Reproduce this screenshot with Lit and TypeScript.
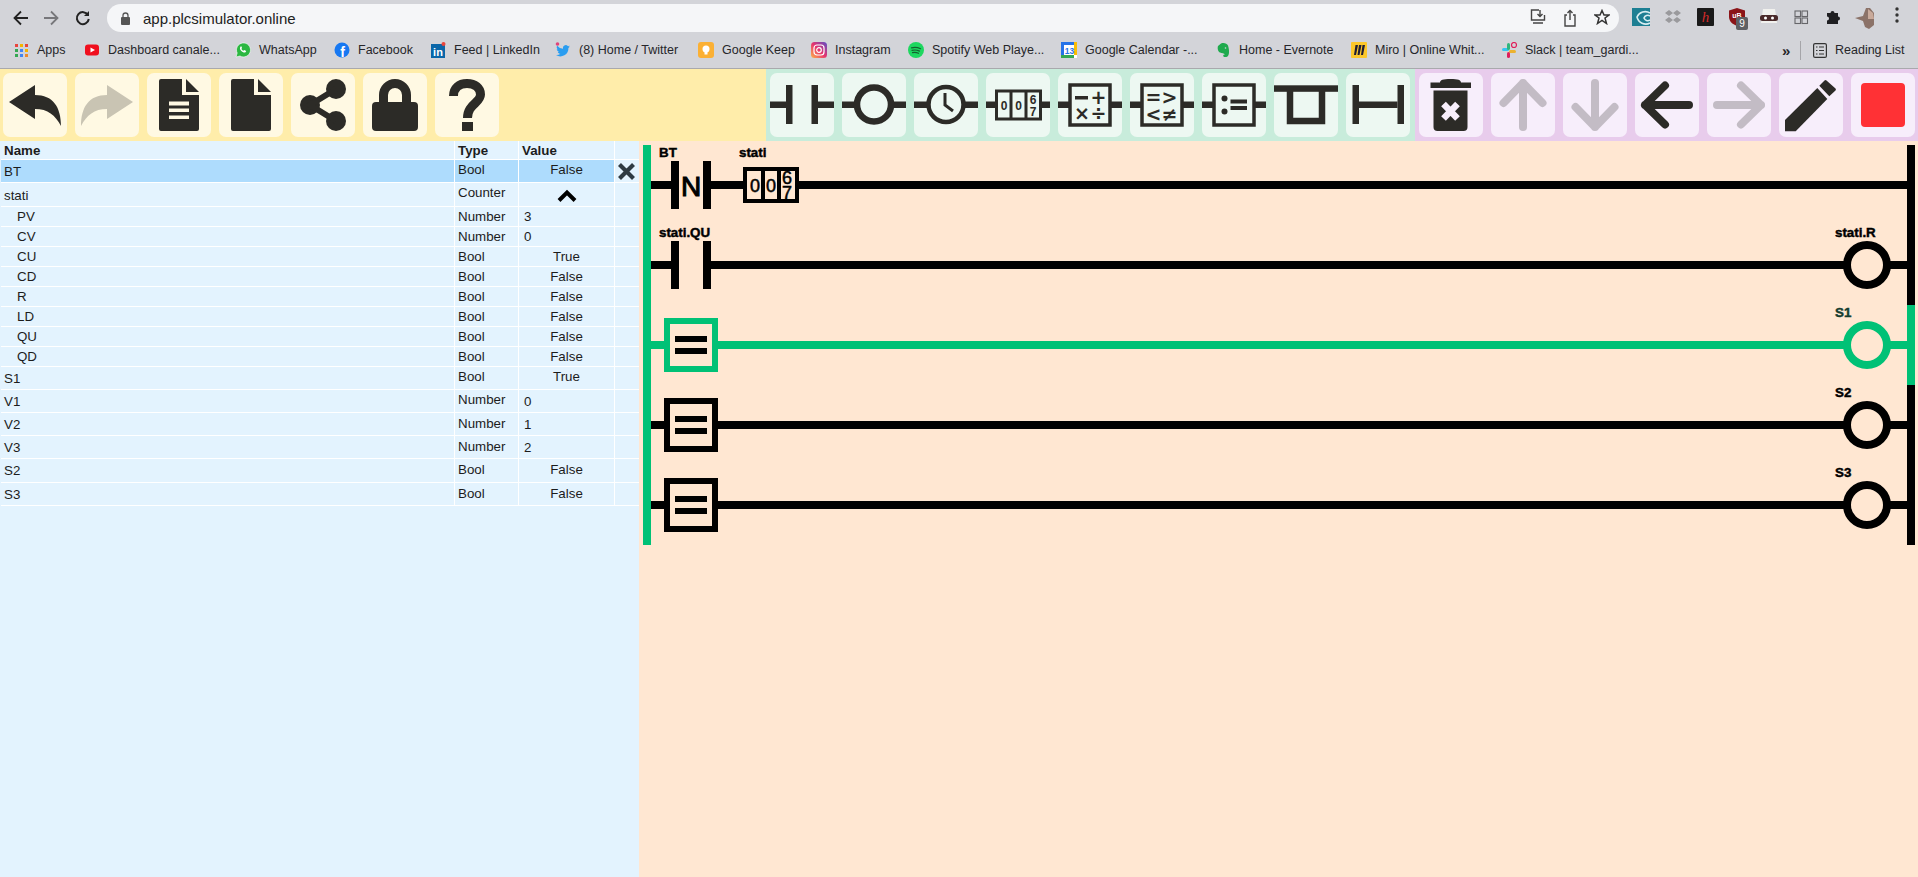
import { LitElement, html, css, svg } from "lit";
import { customElement } from "lit/decorators.js";
import { classMap } from "lit/directives/class-map.js";

const DARK = "#2c2b27";
const GREEN = "#00c176";

// ---- bookmark favicons ----
const favicons: Record<string, any> = {
  apps: svg`${[0, 1, 2].flatMap((r) =>
    [0, 1, 2].map(
      (c) =>
        svg`<rect x=${2 + c * 5} y=${2 + r * 5} width="3" height="3" fill=${["#e8453c", "#f4b400", "#e8453c", "#34a853", "#4285f4", "#f4b400", "#34a853", "#4285f4", "#ee8a2c"][r * 3 + c]}></rect>`,
    ),
  )}`,
  youtube: svg`<rect x="1" y="2.5" width="14" height="11" rx="3" fill="#f00f1e"></rect><path d="M6.5 5.5 11 8 6.5 10.5Z" fill="#fff"></path>`,
  whatsapp: svg`<path d="M1 15l1.2-4A7 7 0 1 1 5 14Z" fill="#2bb741" stroke="#fff" stroke-width=".6"></path><path d="M5.5 4.8c-1 1-.6 2.8.9 4.3s3.3 2 4.3 1l.5-1-2-1-.8.7c-.8-.3-1.600-1.100-2-2l.7-.8-1-2Z" fill="#fff"></path>`,
  facebook: svg`<circle cx="8" cy="8" r="7.5" fill="#1778f2"></circle><text x="8.5" y="14.5" text-anchor="middle" font-size="14" font-weight="700" fill="#fff" font-family="Liberation Sans">f</text>`,
  linkedin: svg`<rect x="1" y="2" width="14" height="14" fill="#0a66a8"></rect><text x="8" y="13.5" text-anchor="middle" font-size="11" font-weight="700" fill="#fff" font-family="Liberation Sans">in</text><circle cx="13.5" cy="2" r="2" fill="#e8453c"></circle>`,
  twitter: svg`<path d="M15 4.5c-.5.2-1 .4-1.600.4.600-.3 1-.9 1.200-1.500-.5.3-1.100.6-1.800.7a2.800 2.800 0 0 0-4.800 2.600A8 8 0 0 1 2.200 3.700a2.800 2.800 0 0 0 .9 3.800c-.5 0-.9-.1-1.300-.4 0 1.400 1 2.500 2.300 2.800-.4.100-.8.100-1.300 0 .4 1.100 1.400 1.900 2.600 1.900A5.700 5.700 0 0 1 1 13a8 8 0 0 0 12.400-7.100c.6-.4 1.200-.9 1.600-1.400Z" fill="#2a9df0"></path><circle cx="2.5" cy="2" r="1.8" fill="#e0457b"></circle>`,
  keep: svg`<rect width="16" height="16" rx="3" fill="#fbb034"></rect><circle cx="8" cy="7" r="3.5" fill="#fff"></circle><rect x="6.5" y="10" width="3" height="2.5" fill="#fff"></rect>`,
  instagram: svg`<defs><linearGradient id="ig" x1="0" y1="1" x2="1" y2="0"><stop offset="0" stop-color="#fdb44a"></stop><stop offset=".5" stop-color="#e6336f"></stop><stop offset="1" stop-color="#5a50c8"></stop></linearGradient></defs><rect width="16" height="16" rx="3.5" fill="url(#ig)"></rect><rect x="3" y="3" width="10" height="10" rx="3" fill="none" stroke="#fff" stroke-width="1.2"></rect><circle cx="8" cy="8" r="2.3" fill="none" stroke="#fff" stroke-width="1.2"></circle>`,
  spotify: svg`<circle cx="8" cy="8" r="8" fill="#1ed760"></circle><path d="M3.5 5.800c3-.8 6-.6 9 .9M4 8.300c2.600-.6 5-.4 7.500.8M4.500 10.600c2.100-.5 4-.3 6 .7" fill="none" stroke="#15602f" stroke-width="1.2" stroke-linecap="round"></path>`,
  calendar: svg`<rect width="16" height="16" fill="#fff"></rect><rect width="16" height="3" fill="#2673e8"></rect><rect width="3" height="16" fill="#2673e8"></rect><rect y="13" width="13" height="3" fill="#34a853"></rect><rect x="13" width="3" height="13" fill="#fbbc04"></rect><text x="8.5" y="11.5" text-anchor="middle" font-size="8.5" font-weight="700" fill="#2673e8" font-family="Liberation Sans">13</text>`,
  evernote: svg`<path d="M3 4 6 1.500c3-1 6 0 7 2 1 3 1.500 7 .5 9.500-1 2.500-4 2.500-5 1.500-.8-1 0-2.500 1.500-2-1-1-3-1.500-5-2C3.500 10 2 7 3 4Z" fill="#1faa4e"></path><circle cx="10.5" cy="6" r=".8" fill="#d3d4d9"></circle>`,
  miro: svg`<rect width="16" height="16" rx="1" fill="#fcc72b"></rect><path d="M4.500 3 3 13h2l2-10ZM8 3 6.500 13h2l2-10ZM11.500 3 10 13h2l2-10Z" fill="#1f1d33"></path>`,
  slack: svg`<rect x="1" y="6" width="7" height="3" rx="1.5" fill="#36c5f0"></rect><rect x="6" y="1" width="3" height="7" rx="1.5" fill="#2eb67d"></rect><rect x="8" y="8" width="7" height="3" rx="1.5" fill="#ecb22e"></rect><rect x="6" y="10" width="3" height="6" rx="1.5" fill="#e01e5a"></rect><circle cx="13" cy="3" r="2.5" fill="none" stroke="#e01e5a" stroke-width="1.2"></circle>`,
};

const bookmarks = [
  { icon: "apps", label: "Apps", width: 71 },
  { icon: "youtube", label: "Dashboard canale...", width: 151 },
  { icon: "whatsapp", label: "WhatsApp", width: 99 },
  { icon: "facebook", label: "Facebook", width: 96 },
  { icon: "linkedin", label: "Feed | LinkedIn", width: 125 },
  { icon: "twitter", label: "(8) Home / Twitter", width: 143 },
  { icon: "keep", label: "Google Keep", width: 113 },
  { icon: "instagram", label: "Instagram", width: 97 },
  { icon: "spotify", label: "Spotify Web Playe...", width: 153 },
  { icon: "calendar", label: "Google Calendar -...", width: 154 },
  { icon: "evernote", label: "Home - Evernote", width: 136 },
  { icon: "miro", label: "Miro | Online Whit...", width: 150 },
  { icon: "slack", label: "Slack | team_gardi...", width: 200 },
];

const extensions = [
  svg`<rect x="1" y="1" width="18" height="18" fill="#1d7f93"></rect><path d="M19 6a9 9 0 0 0-13 4 9 9 0 0 0 13 6M19 9a4 4 0 0 0-6 2 4 4 0 0 0 6 2" fill="none" stroke="#d8eef2" stroke-width="1.6"></path>`,
  svg`<path d="M6 3 10 6 6 9 2 6ZM14 3 18 6 14 9 10 6ZM6 10 10 13 6 16 2 13ZM14 10 18 13 14 16 10 13Z" fill="#9a9a9d"></path>`,
  svg`<rect x="2" y="1" width="17" height="18" rx="1" fill="#1a1a1a"></rect><text x="10.5" y="15" text-anchor="middle" font-size="15" font-style="italic" font-family="Liberation Serif" fill="#d42a2a">h</text>`,
  svg`<path d="M10 1 18 3.500V10c0 4.500-4 7.500-8 9-4-1.500-8-4.500-8-9V3.500Z" fill="#8b1418"></path><text x="10" y="11" text-anchor="middle" font-size="7" font-weight="700" fill="#fff" font-family="Liberation Sans">uB</text>`,
  svg`<path d="M4 2h12l2 14H2Z" fill="#f1f1ee"></path><rect x="1" y="8" width="18" height="6" rx="2.5" fill="#4a2a2a"></rect><circle cx="6.5" cy="11" r="1.5" fill="#fff"></circle><circle cx="13.5" cy="11" r="1.5" fill="#fff"></circle>`,
  svg`<g fill="none" stroke="#66666a" stroke-width="1.1"><rect x="4" y="4" width="5.5" height="5.5"></rect><rect x="11" y="4" width="5.5" height="5.5"></rect><rect x="4" y="11" width="5.5" height="5.5"></rect><rect x="11" y="11" width="5.5" height="5.5"></rect></g>`,
  svg`<path d="M4 6h3.500a2 2 0 1 1 4 0H15v3.500a2 2 0 1 1 0 4V17H4v-3.500a2 2 0 1 0 0-4Z" fill="#1f1f22"></path>`,
];

// ---- toolbar icons, drawn on a 64x64 button ----
const rungWire = (from: number, to: number) =>
  svg`<rect x=${from} y="28.5" width=${to - from} height="6.5"></rect>`;

const boxed = (inner: any) => svg`
  ${rungWire(0, 12)}${rungWire(52, 64)}
  <rect x="12" y="12" width="40" height="40" fill="none" stroke=${DARK} stroke-width="3.5"></rect>
  ${inner}`;

const boxText = (x: number, y: number, s: string) =>
  svg`<text x=${x} y=${y} text-anchor="middle" font-size="19" font-weight="700" fill=${DARK} font-family="DejaVu Sans">${s}</text>`;

const arrow = (d: string) =>
  svg`<path d=${d} fill="none" stroke=${DARK} stroke-width="8" stroke-linecap="round" stroke-linejoin="round"></path>`;

const fileBody = svg`<path d="M12 8a2 2 0 0 1 2-2H35V22H52V56a2 2 0 0 1-2 2H14a2 2 0 0 1-2-2Z"></path><path d="M39 6V19H52Z"></path>`;

const fileIcons = [
  { off: false, s: svg`<path d="M6 29 32 12V22C50 22 58 34 58 53 52 42 45 36 32 36V46Z"></path>` },
  { off: true, s: svg`<path d="M58 29 32 12V22C14 22 6 34 6 53 12 42 19 36 32 36V46Z"></path>` },
  {
    off: false,
    s: svg`${fileBody}<g fill="#fff9e3"><rect x="22" y="28.5" width="20" height="4"></rect><rect x="22" y="35.5" width="20" height="3.5"></rect><rect x="22" y="42.5" width="20" height="3.5"></rect></g>`,
  },
  { off: false, s: fileBody },
  {
    off: false,
    s: svg`<circle cx="45" cy="16" r="10"></circle><circle cx="19" cy="32" r="10"></circle><circle cx="45" cy="48" r="10"></circle><path d="M45 16 19 32 45 48" fill="none" stroke=${DARK} stroke-width="6"></path>`,
  },
  {
    off: false,
    s: svg`<rect x="9" y="29" width="46" height="29" rx="4"></rect><path d="M20.5 30V22a11.5 11.5 0 0 1 23 0V30" fill="none" stroke=${DARK} stroke-width="9"></path>`,
  },
  {
    off: false,
    s: svg`<path d="M18.5 23C18.5 15 24 10.5 32 10.5 40 10.5 45.5 15 45.5 21.5 45.5 30 32.5 31 32.5 45" fill="none" stroke=${DARK} stroke-width="9"></path><rect x="27" y="49" width="11" height="9"></rect>`,
  },
];

const rungIcons = [
  svg`${rungWire(0, 16)}${rungWire(48, 64)}<rect x="16" y="12" width="6.5" height="39"></rect><rect x="41.5" y="12" width="6.5" height="39"></rect>`,
  svg`${rungWire(0, 13)}${rungWire(51, 64)}<circle cx="32" cy="31.5" r="17" fill="none" stroke=${DARK} stroke-width="6.5"></circle>`,
  svg`${rungWire(0, 13)}${rungWire(51, 64)}<circle cx="32" cy="31.5" r="17.5" fill="none" stroke=${DARK} stroke-width="4.5"></circle><path d="M31 20V32L39 38" fill="none" stroke=${DARK} stroke-width="3"></path>`,
  svg`${rungWire(0, 10)}${rungWire(54, 64)}
    <g fill="none" stroke=${DARK} stroke-width="3"><rect x="10.5" y="18" width="44" height="28"></rect><path d="M25 18V46M40 18V46"></path></g>
    <g font-size="12" font-weight="700" text-anchor="middle" font-family="Liberation Sans" fill=${DARK}>
      <text x="18" y="36.5">0</text><text x="32.5" y="36.5">0</text><text x="47" y="31">6</text><text x="47" y="43">7</text>
    </g>`,
  boxed(svg`<rect x="17" y="23" width="13" height="3.5"></rect>${boxText(40.5, 31, "+")}${boxText(24, 47, "×")}${boxText(40.5, 47, "÷")}`),
  boxed(svg`${boxText(23.5, 31, "=")}${boxText(39.5, 31, ">")}${boxText(23.5, 48, "<")}${boxText(39.5, 48, "≠")}`),
  boxed(svg`<circle cx="22.5" cy="25.5" r="3"></circle><circle cx="22.5" cy="38.5" r="3"></circle><rect x="28.5" y="26.5" width="16.5" height="4"></rect><rect x="28.5" y="33" width="16.5" height="4"></rect>`),
  svg`<rect x="0" y="12.3" width="64" height="6.5"></rect><path d="M16 15V48H48V15" fill="none" stroke=${DARK} stroke-width="6.5"></path>`,
  svg`<rect x="6.5" y="12" width="6.5" height="39"></rect><rect x="51.5" y="12" width="6.5" height="39"></rect><rect x="13" y="28.5" width="38.5" height="6.5"></rect>`,
];

const editIcons = [
  {
    off: false,
    s: svg`<path d="M21 9.500C21 7 24 6 31.500 6S42 7 42 9.500H52V15H11.500V9.500Z"></path><path d="M14.500 17.500H48.500V54a4 4 0 0 1-4 4H18.500a4 4 0 0 1-4-4Z"></path><path d="M24.500 31 38.500 45.500M38.500 31 24.500 45.500" stroke="#f7eefb" stroke-width="6.5" fill="none"></path>`,
  },
  { off: true, s: arrow("M32 54V10M12.5 30 32 10 51.5 30") },
  { off: true, s: arrow("M32 10V54M12.5 34 32 54 51.5 34") },
  { off: false, s: arrow("M54 32H10M30 12.5 10 32 30 51.5") },
  { off: true, s: arrow("M10 32H54M34 12.5 54 32 34 51.5") },
  {
    off: false,
    s: svg`<path d="M6 47V58.300H16.700L48.300 26 38.300 15Z"></path><path d="M40.300 12.700 45.500 7.500a1.500 1.500 0 0 1 2 0L56.500 15.500a1.500 1.500 0 0 1 0 2L50.300 23.300Z"></path>`,
  },
  { off: false, s: svg`<rect x="10" y="10" width="44" height="44" rx="4" fill="#ff3135"></rect>` },
];

// ---- variable table ----
type Row = {
  name: string;
  type: string;
  value?: string;
  kind: "sub" | "tall" | "stati" | "bt" | "s2";
  num?: boolean;
  low?: boolean;
};

const rows: Row[] = [
  { name: "BT", type: "Bool", value: "False", kind: "bt" },
  { name: "stati", type: "Counter", kind: "stati" },
  { name: "PV", type: "Number", value: "3", kind: "sub", num: true },
  { name: "CV", type: "Number", value: "0", kind: "sub", num: true },
  { name: "CU", type: "Bool", value: "True", kind: "sub" },
  { name: "CD", type: "Bool", value: "False", kind: "sub" },
  { name: "R", type: "Bool", value: "False", kind: "sub" },
  { name: "LD", type: "Bool", value: "False", kind: "sub" },
  { name: "QU", type: "Bool", value: "False", kind: "sub" },
  { name: "QD", type: "Bool", value: "False", kind: "sub" },
  { name: "S1", type: "Bool", value: "True", kind: "tall" },
  { name: "V1", type: "Number", value: "0", kind: "tall", num: true },
  { name: "V2", type: "Number", value: "1", kind: "tall", num: true, low: true },
  { name: "V3", type: "Number", value: "2", kind: "tall", num: true, low: true },
  { name: "S2", type: "Bool", value: "False", kind: "s2", low: true },
  { name: "S3", type: "Bool", value: "False", kind: "tall", low: true },
];

// ---- ladder diagram, coordinates are page pixels of the first rung ----
const RAIL_L = 651;
const COIL_X = 1867;
const RAIL_R = 1907;

const label = (x: number, y: number, s: string, color = "#000") =>
  svg`<text x=${x} y=${y} class="tag" fill=${color} stroke=${color}>${s}</text>`;

const wire = (from: number, to: number, y: number, color = "#000") =>
  svg`<rect x=${from} y=${y - 4} width=${to - from} height="8" fill=${color}></rect>`;

const contact = (y: number) =>
  svg`<rect x="671" y=${y - 24} width="8" height="48"></rect><rect x="703" y=${y - 24} width="8" height="48"></rect>`;

const coil = (y: number, name: string, color = "#000", tagColor = "#000") => svg`
  ${wire(COIL_X + 20, RAIL_R, y, color)}
  <circle cx=${COIL_X} cy=${y} r="20" fill="none" stroke=${color} stroke-width="8"></circle>
  ${label(1835, y - 28, name, tagColor)}`;

const compare = (y: number, color = "#000") => svg`
  <rect x="667" y=${y - 24} width="48" height="48" fill="none" stroke=${color} stroke-width="6"></rect>
  <rect x="675" y=${y - 9} width="32" height="6"></rect>
  <rect x="675" y=${y + 3} width="32" height="6"></rect>`;

@customElement("app-root")
export class AppRoot extends LitElement {
  static styles = css`
    :host {
      display: flex;
      flex-direction: column;
      height: 877px;
      overflow: hidden;
      font-family: "Liberation Sans", Arial, sans-serif;
      color: #1c1c1c;
    }

    svg {
      display: block;
      flex: none;
    }

    /* browser chrome */
    .chrome {
      background: #d3d4d9;
      border-bottom: 1px solid #a9a9ad;
      padding-bottom: 4px;
    }
    .nav-row {
      display: flex;
      align-items: center;
      height: 36px;
      padding-left: 13px;
    }
    .nav-icons {
      display: flex;
      gap: 16px;
      width: 94px;
    }
    .omnibox {
      display: flex;
      align-items: center;
      width: 1512px;
      height: 28px;
      border-radius: 14px;
      background: #f5f6f8;
      padding-left: 14px;
      box-sizing: border-box;
    }
    .url {
      margin-left: 12px;
      font-size: 15px;
      color: #222;
      flex: 1;
    }
    .omni-actions {
      display: flex;
      gap: 17px;
      padding-right: 9px;
    }
    .extensions {
      display: flex;
      margin-left: 6px;
    }
    .ext {
      position: relative;
      width: 32px;
      display: flex;
      justify-content: center;
    }
    .badge {
      position: absolute;
      left: 15px;
      top: 10px;
      width: 12px;
      height: 13px;
      border-radius: 2px;
      background: #5f6063;
      color: #fff;
      font-size: 10px;
      line-height: 13px;
      text-align: center;
    }
    .avatar {
      width: 23px;
      height: 23px;
    }
    .bookmarks {
      display: flex;
      align-items: center;
      height: 28px;
      padding-left: 13px;
      font-size: 12.5px;
      color: #26262a;
    }
    .bookmark {
      display: flex;
      align-items: center;
      gap: 8px;
      white-space: nowrap;
    }
    .more {
      margin-left: 81px;
      width: 18px;
      font-size: 15px;
      font-weight: 700;
    }
    .sep {
      width: 1px;
      height: 19px;
      background: #a5a5a9;
      margin-right: 12px;
    }
    .reading {
      display: flex;
      align-items: center;
      gap: 8px;
    }

    /* toolbar */
    .toolbar {
      display: flex;
      height: 72px;
    }
    .group {
      display: flex;
      flex: none;
      gap: 8px;
      padding: 4px;
      box-sizing: border-box;
    }
    .group.file {
      width: 766px;
      padding-left: 3px;
      background: #ffedaa;
    }
    .group.rung {
      width: 649px;
      background: #c8ecdb;
    }
    .group.edit {
      width: 503px;
      padding-right: 3px;
      background: #e8ccec;
    }
    .tool {
      flex: none;
      width: 64px;
      height: 64px;
      border-radius: 7px;
      fill: #2c2b27;
    }
    .file .tool {
      background: #fff9e3;
    }
    .rung .tool {
      background: #edf8f2;
    }
    .edit .tool {
      background: #f7eefb;
    }
    .tool.off svg {
      opacity: 0.25;
    }

    /* main */
    .main {
      display: flex;
      flex: 1;
      min-height: 0;
    }
    .vars {
      width: 639px;
      background: #e3f3fe;
      font-size: 13.33px;
      line-height: 15px;
    }
    .row {
      display: grid;
      grid-template-columns: 453px 64px 96px 25px;
      margin-left: 1px;
      height: 20px;
      box-sizing: border-box;
      border-bottom: 1px solid #fff;
    }
    .row.head {
      height: 19px;
      font-weight: 700;
    }
    .row.bt,
    .row.tall {
      height: 23px;
    }
    .row.stati,
    .row.s2 {
      height: 24px;
    }
    .cell {
      border-left: 1px solid #fff;
      padding: 2px 0 0 3px;
      min-width: 0;
    }
    .row.low .type,
    .row.low .val {
      padding-top: 3px;
    }
    .cell.name {
      border-left: none;
      display: flex;
      align-items: center;
      padding: 0 0 0 3px;
    }
    .head .cell.name {
      align-items: flex-start;
      padding-top: 2px;
    }
    .sub .name {
      padding-left: 16px;
    }
    .cell.val {
      text-align: center;
      padding-left: 0;
    }
    .cell.num {
      display: flex;
      align-items: center;
      padding: 0 0 0 5px;
    }
    .bt .name,
    .bt .type,
    .bt .val {
      background: #aedcfd;
    }
    .cell.icon {
      padding: 0;
      display: flex;
      justify-content: center;
      align-items: center;
    }
    .close {
      padding-right: 2px !important;
    }

    .ladder {
      flex: 1;
      background: #ffe7d2;
      padding-top: 4px;
    }
    .tag {
      font: 700 13.33px "Liberation Sans", Arial, sans-serif;
      stroke-width: 0.45px;
    }
    .tag-n {
      font: 400 28px "Liberation Sans", Arial, sans-serif;
      stroke: #000;
      stroke-width: 1.1px;
    }
    .digit {
      font: 400 18px "Liberation Sans", Arial, sans-serif;
      stroke: #000;
      stroke-width: 0.5px;
    }
  `;

  private renderChrome() {
    return html`
      <div class="chrome">
        <div class="nav-row">
          <div class="nav-icons">
            <svg width="15" height="16" viewBox="0 0 15 16" fill="none" stroke="#222" stroke-width="1.8"><path d="M15 8H1.5M8 1.5 1.5 8 8 14.5"></path></svg>
            <svg width="15" height="16" viewBox="0 0 15 16" fill="none" stroke="#77777b" stroke-width="1.8"><path d="M0 8H13.5M7 1.5 13.5 8 7 14.5"></path></svg>
            <svg width="15" height="16" viewBox="0 0 15 16" fill="none" stroke="#222" stroke-width="2"><path d="M13 5A6 6 0 1 0 13.8 9"></path><path d="M14 1V6H9" fill="#222" stroke="none"></path></svg>
          </div>
          <div class="omnibox">
            <svg width="10" height="13" viewBox="0 0 10 13"><rect y="5" width="9" height="8" rx="1" fill="#555"></rect><path d="M2 6V3.5a2.5 2.5 0 0 1 5 0V6" fill="none" stroke="#555" stroke-width="1.3"></path></svg>
            <span class="url">app.plcsimulator.online</span>
            <div class="omni-actions">
              <svg width="16" height="18" viewBox="0 0 16 18" fill="none" stroke="#444" stroke-width="1.4"><path d="M9 1H1.5V11H14.5V6M10 1V7M7.5 5 10 7.5 12.5 5M3 14H13"></path></svg>
              <svg width="14" height="18" viewBox="0 0 14 18" fill="none" stroke="#444" stroke-width="1.4"><path d="M4 6H2V17H12V6H10M7 11V1.5M4.5 4 7 1.5 9.5 4"></path></svg>
              <svg width="16" height="16" viewBox="0 0 16 16" fill="none" stroke="#333" stroke-width="1.5"><path d="M8 1.5 10 6H15L11 9 12.5 14.5 8 11.5 3.5 14.5 5 9 1 6H6Z"></path></svg>
            </div>
          </div>
          <div class="extensions">
            ${extensions.map(
              (e, i) => html`<div class="ext"><svg width="20" height="20" viewBox="0 0 20 20">${e}</svg>${i === 3 ? html`<span class="badge">9</span>` : ""}</div>`,
            )}
            <div class="ext">
              <svg class="avatar" viewBox="0 0 23 23"><path d="M1 11 9 9 12 1 16 1 20 6 20 18 15 22 11 20 9 14Z" fill="#8b7268"></path><path d="M14 2 19 6 20 12H14Z" fill="#c9aa9b"></path></svg>
            </div>
            <div class="ext">
              <svg width="4" height="16" viewBox="0 0 4 16" fill="#333"><circle cx="2" cy="2" r="1.7"></circle><circle cx="2" cy="8" r="1.7"></circle><circle cx="2" cy="14" r="1.7"></circle></svg>
            </div>
          </div>
        </div>
        <div class="bookmarks">
          ${bookmarks.map(
            (b) => html`<div class="bookmark" style="width:${b.width}px">
              <svg width="16" height="16" viewBox="0 0 16 16">${favicons[b.icon]}</svg>${b.label}
            </div>`,
          )}
          <span class="more">»</span>
          <span class="sep"></span>
          <div class="reading">
            <svg width="14" height="15" viewBox="0 0 14 15" fill="none" stroke="#333" stroke-width="1.2"><rect x=".6" y=".6" width="12.8" height="13.8" rx="1.5"></rect><path d="M3 4H4.5M6 4H11M3 7.5H4.5M6 7.5H11M3 11H4.5M6 11H11"></path></svg>
            Reading List
          </div>
        </div>
      </div>
    `;
  }

  private renderToolbar() {
    const tool = (t: { off?: boolean; s: any }) => html`
      <div class=${classMap({ tool: true, off: !!t.off })}>
        <svg width="64" height="64" viewBox="0 0 64 64">${t.s}</svg>
      </div>
    `;
    return html`
      <div class="toolbar">
        <div class="group file">${fileIcons.map(tool)}</div>
        <div class="group rung">${rungIcons.map((s) => tool({ s }))}</div>
        <div class="group edit">${editIcons.map(tool)}</div>
      </div>
    `;
  }

  private renderVars() {
    return html`
      <div class="vars">
        <div class="row head">
          <div class="cell name">Name</div>
          <div class="cell type">Type</div>
          <div class="cell">Value</div>
          <div class="cell"></div>
        </div>
        ${rows.map(
          (r) => html`
            <div class=${classMap({ row: true, [r.kind]: true, low: !!r.low })}>
              <div class="cell name">${r.name}</div>
              <div class="cell type">${r.type}</div>
              ${r.kind === "stati"
                ? html`<div class="cell icon">
                    <svg width="20" height="24" viewBox="0 0 20 24" fill="none" stroke="#000" stroke-width="4"><path d="M2 17.5 10 9.5 18 17.5"></path></svg>
                  </div>`
                : r.num
                  ? html`<div class="cell num">${r.value}</div>`
                  : html`<div class="cell val">${r.value}</div>`}
              <div class="cell icon close">
                ${r.kind === "bt"
                  ? html`<svg width="17" height="17" viewBox="0 0 17 17" stroke="#2e3a42" stroke-width="4.2"><path d="M1.5 1.5 15.5 15.5M15.5 1.5 1.5 15.5"></path></svg>`
                  : ""}
              </div>
            </div>
          `,
        )}
      </div>
    `;
  }

  private renderLadder() {
    return html`
      <div class="ladder">
        <svg width="1279" height="400" viewBox="639 145 1279 400">
          <rect x="643" y="145" width="8" height="400" fill=${GREEN}></rect>
          <rect x=${RAIL_R} y="145" width="8" height="400"></rect>
          <rect x=${RAIL_R} y="305" width="8" height="80" fill=${GREEN}></rect>

          <!-- BT falling edge, counter stati -->
          ${wire(RAIL_L, 671, 185)}${contact(185)}${wire(711, 743, 185)}${wire(799, RAIL_R, 185)}
          ${label(659, 157, "BT")}${label(739, 157, "stati")}
          <text x="691" y="196" text-anchor="middle" class="tag-n">N</text>
          <g fill="none" stroke="#000" stroke-width="4">
            <rect x="745" y="169" width="52" height="32"></rect>
            <path d="M763 169V201M779 169V201"></path>
          </g>
          <g class="digit" text-anchor="middle">
            <text x="755" y="192">0</text><text x="771" y="192">0</text>
            <text x="787" y="184">6</text><text x="787" y="199">7</text>
          </g>

          <!-- stati.QU resets the counter -->
          ${wire(RAIL_L, 671, 265)}${contact(265)}${wire(711, COIL_X - 20, 265)}
          ${label(659, 237, "stati.QU")}${coil(265, "stati.R")}

          <!-- step comparators -->
          ${wire(RAIL_L, 667, 345, GREEN)}${wire(715, COIL_X - 20, 345, GREEN)}
          ${compare(345, GREEN)}${coil(345, "S1", GREEN, "#143d2f")}

          ${wire(RAIL_L, 667, 425)}${wire(715, COIL_X - 20, 425)}
          ${compare(425)}${coil(425, "S2")}

          ${wire(RAIL_L, 667, 505)}${wire(715, COIL_X - 20, 505)}
          ${compare(505)}${coil(505, "S3")}
        </svg>
      </div>
    `;
  }

  render() {
    return html`
      ${this.renderChrome()} ${this.renderToolbar()}
      <div class="main">${this.renderVars()} ${this.renderLadder()}</div>
    `;
  }
}
